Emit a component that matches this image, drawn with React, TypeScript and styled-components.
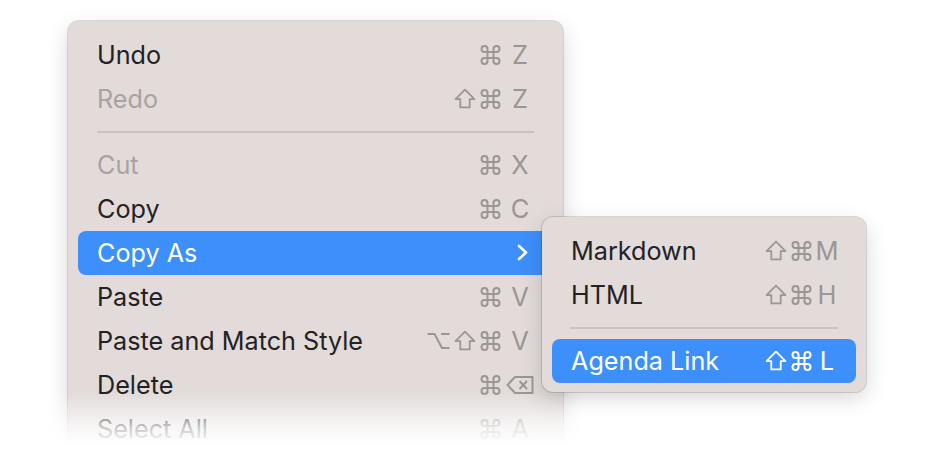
import React from "react";
import styled, { createGlobalStyle } from "styled-components";

const Global = createGlobalStyle`
  html, body { margin: 0; padding: 0; background: #ffffff; }
  body { font-family: Inter, "Noto Sans", "Liberation Sans", sans-serif; -webkit-font-smoothing: antialiased; }
`;

const Page = styled.div`
  position: relative;
  width: 927px;
  height: 455px;
  overflow: hidden;
  background: #ffffff;
  padding: 21px 0 0 68px;
  box-sizing: border-box;
`;

const Menu = styled.div<{ $width: number; $padBottom: number }>`
  width: ${(p) => p.$width}px;
  box-sizing: border-box;
  padding: 12px 10px ${(p) => p.$padBottom}px;
  background: #e2dbda;
  border-radius: 11px;
  box-shadow: 0 0 0 1px rgba(0, 0, 0, 0.13), 0 8px 22px rgba(0, 0, 0, 0.16);
  display: flex;
  flex-direction: column;
`;

const SubMenuWrap = styled.div`
  position: absolute;
  left: 464px;
  top: -14px;
  z-index: 5;
`;

const Row = styled.div<{ $active?: boolean; $disabled?: boolean; $padRight: number }>`
  position: relative;
  height: 44px;
  box-sizing: border-box;
  display: flex;
  align-items: center;
  padding: 0 ${(p) => p.$padRight}px 1px 19px;
  border-radius: 8px;
  font-size: 25.2px;
  background: ${(p) => (p.$active ? "#3d8ffb" : "transparent")};
  color: ${(p) => (p.$active ? "#ffffff" : p.$disabled ? "#a8a2a1" : "#232222")};
`;

const Label = styled.span`
  flex: 1;
  white-space: nowrap;
`;

const Shortcut = styled.span<{ $active?: boolean; $gap: number }>`
  display: flex;
  align-items: center;
  gap: ${(p) => p.$gap}px;
  color: ${(p) => (p.$active ? "#ffffff" : "#9b9594")};
`;

const Mods = styled.span`
  display: flex;
  align-items: center;
  gap: 4px;
`;

const KeyCol = styled.span<{ $w: number }>`
  width: ${(p) => p.$w}px;
  display: flex;
  justify-content: center;
  align-items: center;
  font-size: 25.5px;
`;

const Separator = styled.div<{ $inset: number }>`
  height: 22px;
  display: flex;
  align-items: center;
  padding: 0 ${(p) => p.$inset}px;
  &::after {
    content: "";
    flex: 1;
    height: 2px;
    background: #c9c2c1;
  }
`;

const Fade = styled.div`
  position: absolute;
  left: 0;
  right: 0;
  bottom: 0;
  height: 62px;
  background: linear-gradient(to bottom, rgba(255, 255, 255, 0) 0%, rgba(255, 255, 255, 0.75) 55%, #ffffff 85%);
  pointer-events: none;
  z-index: 10;
`;

const Cmd = () => (
  <svg width="21" height="20" viewBox="0 0 20 20" fill="none" stroke="currentColor" strokeWidth="2">
    <path d="M7 7h6v6H7z" />
    <path d="M7 7V4a3 3 0 1 0-3 3h3" />
    <path d="M13 7V4a3 3 0 1 1 3 3h-3" />
    <path d="M7 13v3a3 3 0 1 1-3-3h3" />
    <path d="M13 13v3a3 3 0 1 0 3-3h-3" />
  </svg>
);

const Shift = () => (
  <svg width="22" height="21" viewBox="0 0 21 20" fill="none" stroke="currentColor" strokeWidth="1.7" strokeLinejoin="round">
    <path d="M10.5 1.5L1.5 10.5H6V18.5H15V10.5H19.5Z" />
  </svg>
);

const Opt = () => (
  <svg width="23" height="18" viewBox="0 0 23 18" fill="none" stroke="currentColor" strokeWidth="2">
    <path d="M0.5 2H7.5L15 16H22.5" />
    <path d="M14 2H22.5" />
  </svg>
);

const Back = () => (
  <svg width="28" height="20" viewBox="0 0 28 20" fill="none" stroke="currentColor" strokeWidth="1.9" strokeLinejoin="round">
    <path d="M9 2H26.5V18H9L1.5 10Z" />
    <path d="M13.5 6L21 14M21 6L13.5 14" />
  </svg>
);

const Chevron = () => (
  <svg width="11" height="17" viewBox="0 0 11 17" fill="none" stroke="currentColor" strokeWidth="2.6" strokeLinecap="round" strokeLinejoin="round">
    <path d="M2 2L9 8.5L2 15" />
  </svg>
);

type Item =
  | { sep: true }
  | {
      sep?: false;
      label: string;
      mods?: Array<"cmd" | "shift" | "opt">;
      key?: React.ReactNode;
      disabled?: boolean;
      active?: boolean;
      submenu?: boolean;
    };

const modIcon = (m: "cmd" | "shift" | "opt", i: number) =>
  m === "cmd" ? <Cmd key={i} /> : m === "shift" ? <Shift key={i} /> : <Opt key={i} />;

const mainItems: Item[] = [
  { label: "Undo", mods: ["cmd"], key: "Z" },
  { label: "Redo", mods: ["shift", "cmd"], key: "Z", disabled: true },
  { sep: true },
  { label: "Cut", mods: ["cmd"], key: "X", disabled: true },
  { label: "Copy", mods: ["cmd"], key: "C" },
  { label: "Copy As", active: true, submenu: true },
  { label: "Paste", mods: ["cmd"], key: "V" },
  { label: "Paste and Match Style", mods: ["opt", "shift", "cmd"], key: "V" },
  { label: "Delete", mods: ["cmd"], key: <Back /> },
  { label: "Select All", mods: ["cmd"], key: "A" },
];

const subItems: Item[] = [
  { label: "Markdown", mods: ["shift", "cmd"], key: "M" },
  { label: "HTML", mods: ["shift", "cmd"], key: "H" },
  { sep: true },
  { label: "Agenda Link", mods: ["shift", "cmd"], key: "L", active: true },
];

function MenuList({
  items,
  padRight,
  keyW,
  gap,
  sepInset,
  sub,
}: {
  items: Item[];
  padRight: number;
  keyW: number;
  gap: number;
  sepInset: number;
  sub?: React.ReactNode;
}) {
  return (
    <>
      {items.map((it, i) => {
        if (it.sep) return <Separator key={i} $inset={sepInset} />;
        return (
          <Row key={i} $active={it.active} $disabled={it.disabled} $padRight={it.submenu ? 25 : padRight}>
            <Label>{it.label}</Label>
            {it.submenu ? (
              <Chevron />
            ) : (
              <Shortcut $active={it.active} $gap={gap}>
                <Mods>{it.mods?.map(modIcon)}</Mods>
                <KeyCol $w={keyW}>{it.key}</KeyCol>
              </Shortcut>
            )}
            {it.submenu && sub}
          </Row>
        );
      })}
    </>
  );
}

export default function App() {
  return (
    <>
      <Global />
      <Page>
        <Menu $width={495} $padBottom={12}>
          <MenuList
            items={mainItems}
            padRight={18}
            keyW={30}
            gap={4}
            sepInset={19}
            sub={
              <SubMenuWrap>
                <Menu $width={324} $padBottom={9}>
                  <MenuList items={subItems} padRight={16} keyW={26} gap={2} sepInset={18} />
                </Menu>
              </SubMenuWrap>
            }
          />
        </Menu>
        <Fade />
      </Page>
    </>
  );
}
